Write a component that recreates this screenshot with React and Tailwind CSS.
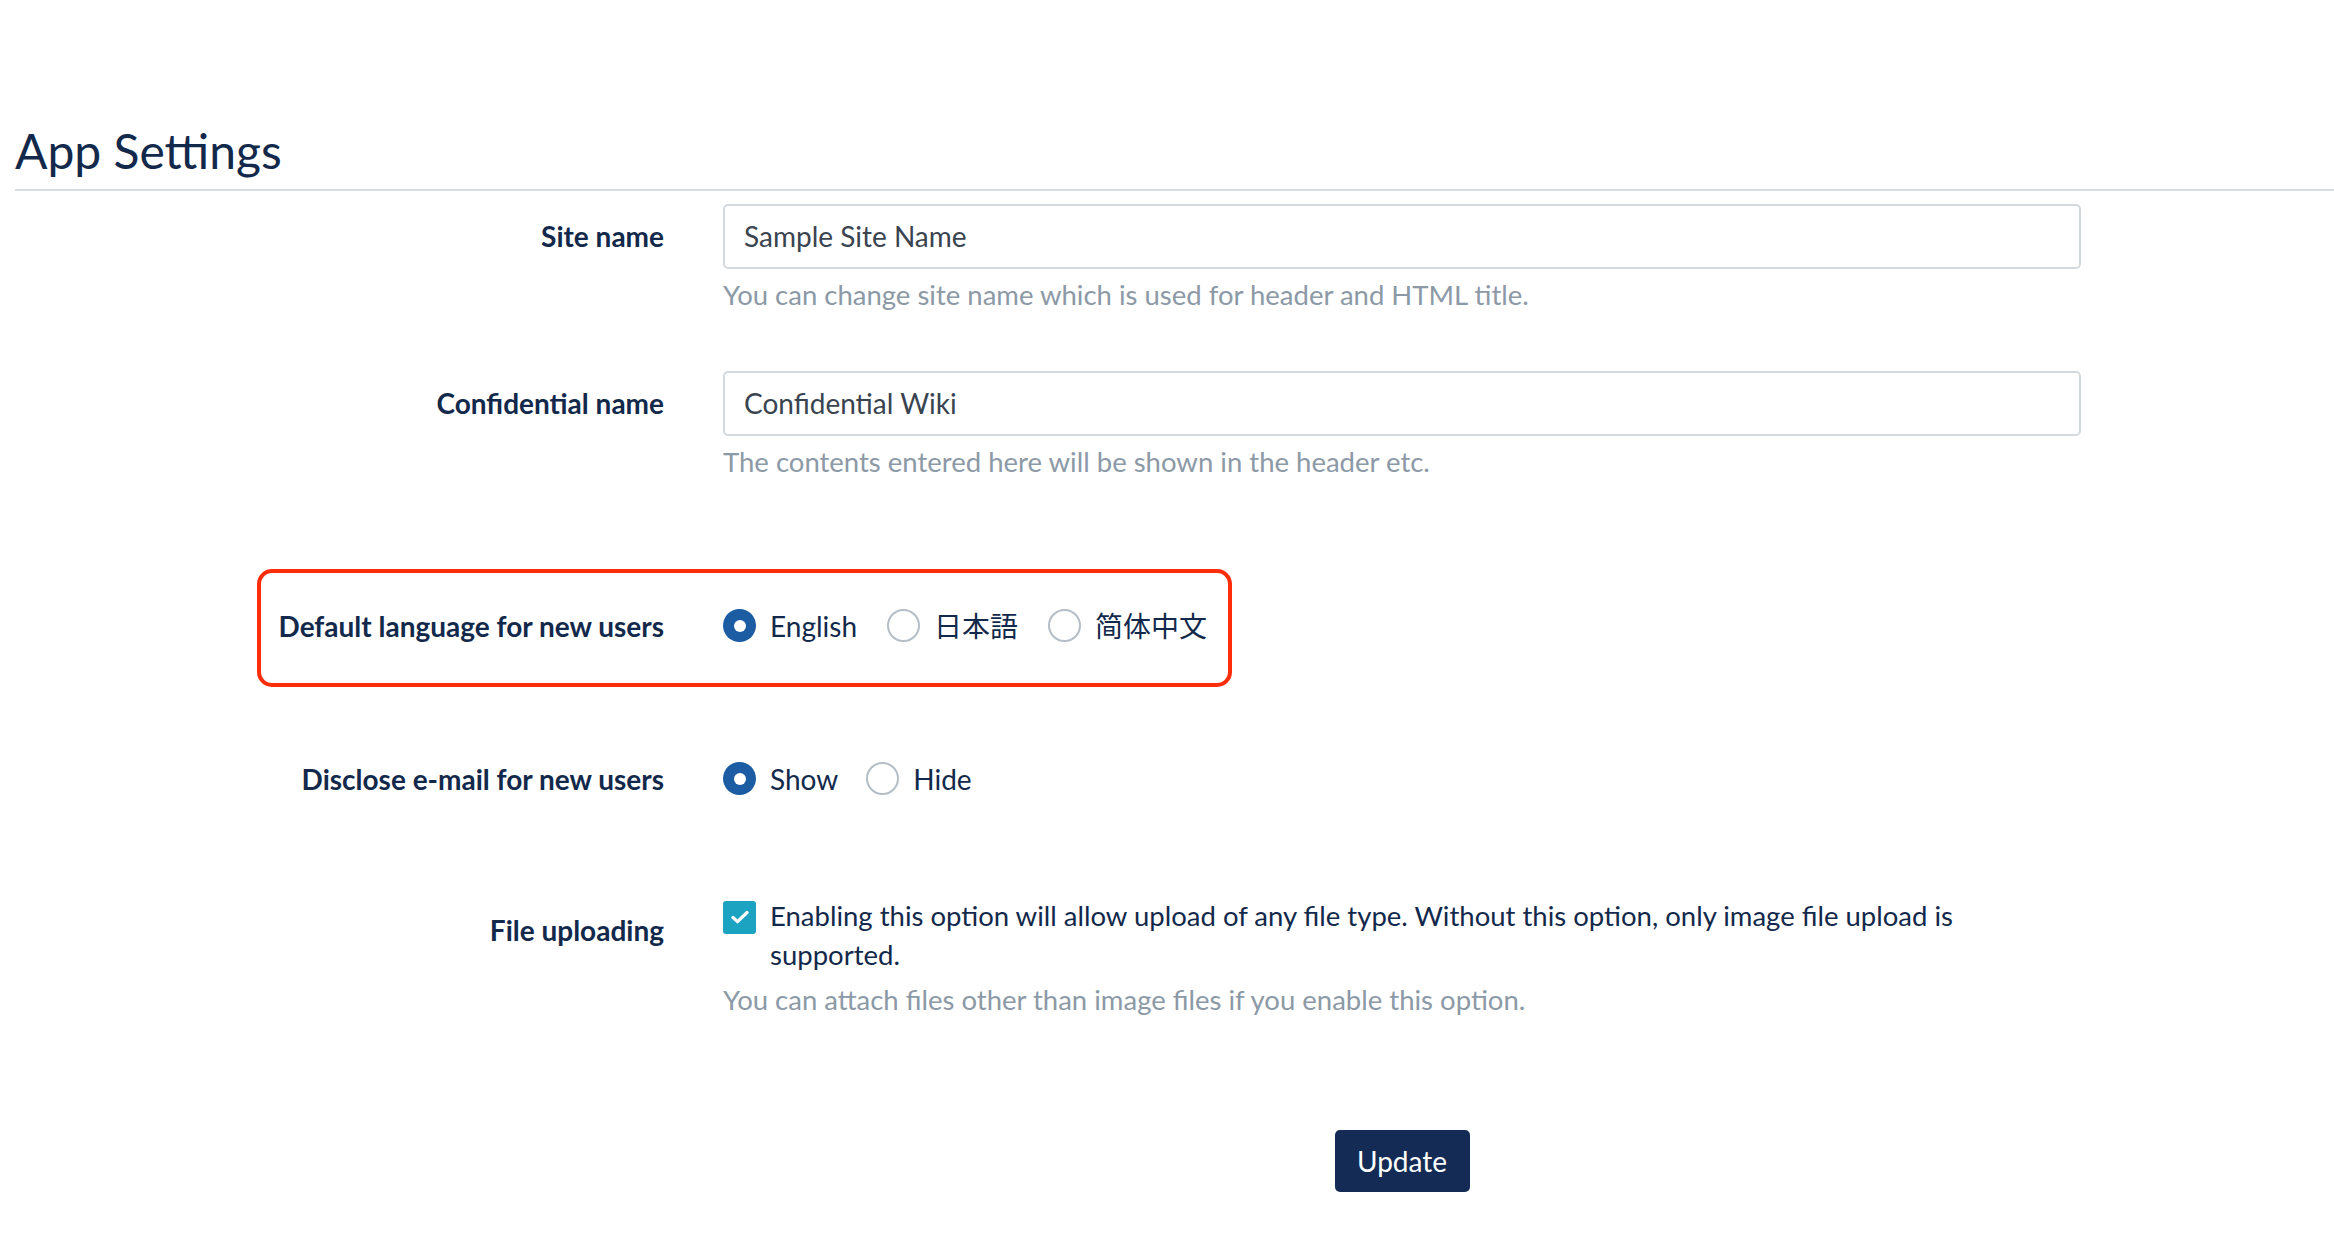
const font = { fontFamily: "Lato, 'Noto Sans CJK JP', 'Noto Sans CJK SC', sans-serif" };

const Radio = ({ checked, label }) => (
  <label className="flex items-center gap-[14px]">
    {checked ? (
      <span className="flex h-[33px] w-[33px] items-center justify-center rounded-full bg-[#1b5ca3]">
        <span className="h-[12px] w-[12px] rounded-full bg-white" />
      </span>
    ) : (
      <span className="h-[33px] w-[33px] rounded-full border-2 border-[#b5bdc7] bg-white" />
    )}
    <span className="text-[28px] leading-[40px] text-[#13294b]">{label}</span>
  </label>
);

const FieldLabel = ({ children, className = '' }) => (
  <div className={`flex w-[649px] shrink-0 justify-end text-[28px] font-bold text-[#13294b] ${className}`}>
    {children}
  </div>
);

const TextRow = ({ label, value, help, className = '' }) => (
  <div className={`flex ${className}`}>
    <FieldLabel className="h-[65px] items-center">{label}</FieldLabel>
    <div className="ml-[59px] w-[1358px]">
      <div className="flex h-[65px] items-center rounded-[5px] border-2 border-[#d4d9de] bg-white px-[19px] text-[28px] text-[#3a4450]">
        {value}
      </div>
      <p className="mt-[6px] text-[27.5px] leading-[40px] text-[#8c99a6]">{help}</p>
    </div>
  </div>
);

export default function App() {
  return (
    <div className="min-h-screen bg-white pl-[15px] pt-[122px]" style={font}>
      <h1 className="border-b-2 border-[#d8dde2] pb-[9px] text-[48px] leading-[1.2] text-[#13294b]">App Settings</h1>

      <TextRow
        className="mt-[13px]"
        label="Site name"
        value="Sample Site Name"
        help="You can change site name which is used for header and HTML title."
      />
      <TextRow
        className="mt-[56px]"
        label="Confidential name"
        value="Confidential Wiki"
        help="The contents entered here will be shown in the header etc."
      />

      <div className="relative mt-[124px] flex h-[40px] items-center">
        <div className="pointer-events-none absolute left-[242px] top-[-37px] h-[118px] w-[975px] rounded-[15px] border-4 border-[#ff2d0a]" />
        <FieldLabel className="items-center">Default language for new users</FieldLabel>
        <div className="ml-[59px] flex items-center gap-[30px]">
          <Radio checked label="English" />
          <Radio label="日本語" />
          <Radio label="简体中文" />
        </div>
      </div>

      <div className="mt-[113px] flex h-[40px] items-center">
        <FieldLabel className="items-center">Disclose e-mail for new users</FieldLabel>
        <div className="ml-[59px] flex items-center gap-[28px]">
          <Radio checked label="Show" />
          <Radio label="Hide" />
        </div>
      </div>

      <div className="mt-[97px] flex">
        <FieldLabel className="pt-[14px] leading-[40px]">File uploading</FieldLabel>
        <div className="ml-[59px] w-[1358px]">
          <div className="flex items-start gap-[14px]">
            <span className="mt-[5px] flex h-[33px] w-[33px] shrink-0 items-center justify-center rounded-[3px] bg-[#1ba3c1]">
              <svg width="18" height="14" viewBox="0 0 18 14" fill="none">
                <path d="M2 7.5l4.5 4.2L16 2.5" stroke="white" strokeWidth="3.2" strokeLinecap="round" strokeLinejoin="round" />
              </svg>
            </span>
            <p className="text-[27.5px] leading-[39px] text-[#13294b]">
              Enabling this option will allow upload of any file type. Without this option, only image file upload is supported.
            </p>
          </div>
          <p className="mt-[6px] text-[27.5px] leading-[40px] text-[#8c99a6]">
            You can attach files other than image files if you enable this option.
          </p>
        </div>
      </div>

      <div className="mt-[110px] flex pb-[50px]">
        <div className="w-[649px] shrink-0" />
        <div className="ml-[59px] flex w-[1358px] justify-center">
          <button className="h-[62px] w-[135px] rounded-[5px] bg-[#142c55] text-[28px] text-white">Update</button>
        </div>
      </div>
    </div>
  );
}
